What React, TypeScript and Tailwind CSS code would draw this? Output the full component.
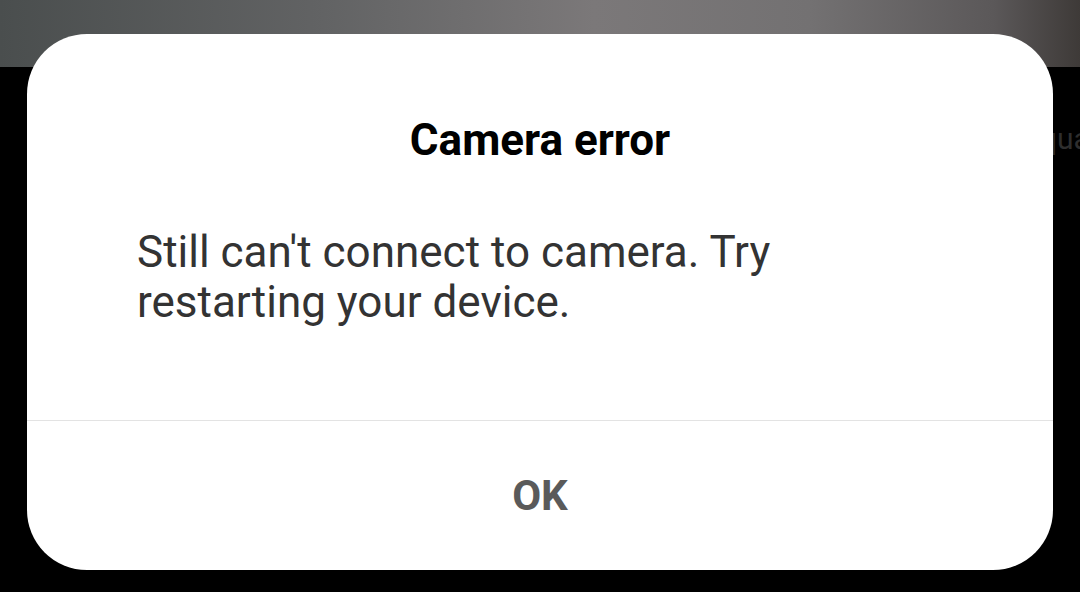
export default function App() {
  return (
    <div
      className="relative w-[1080px] h-[592px] overflow-hidden bg-black"
      style={{ fontFamily: "Roboto, 'Noto Sans', sans-serif" }}
    >
      {/* status / camera preview strip behind the dialog */}
      <div className="h-[67px] bg-[linear-gradient(90deg,#4a4e4e_0%,#626364_30%,#7b7879_55%,#737172_75%,#5b5859_92%,#3e3a38_100%)]" />
      <div className="absolute left-[1040px] top-[124px] text-[30px] leading-none text-[#2e2e2e]">
        qua
      </div>

      {/* dialog */}
      <div className="absolute left-[27px] top-[34px] flex h-[536px] w-[1026px] flex-col rounded-[60px] bg-white">
        <h1 className="pt-[82px] text-center text-[44px] font-bold leading-[48px] text-black">
          Camera error
        </h1>
        <p className="mt-[63px] px-[110px] text-[44px] leading-[50px] text-[#333333]">
          Still can't connect to camera. Try
          <br />
          restarting your device.
        </p>
        <div className="mt-auto border-t border-[#e3e3e3]">
          <button className="flex h-[149px] w-full items-center justify-center text-[42px] font-bold text-[#5a5a5a]">
            OK
          </button>
        </div>
      </div>
    </div>
  );
}
